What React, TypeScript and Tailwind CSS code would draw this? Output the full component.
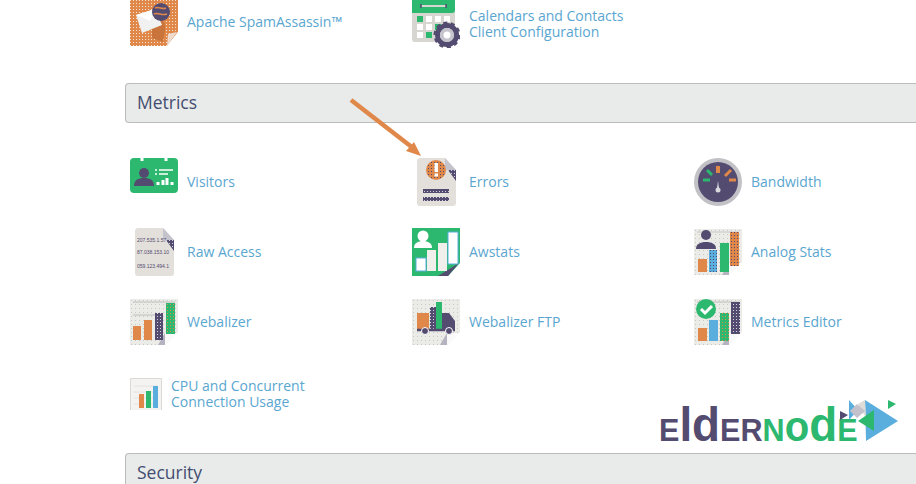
import type { ReactNode } from 'react';

const GREEN = '#2cb86f';
const PURPLE = '#534b70';
const ORANGE = '#e0884a';
const BLUE = '#5aaede';
const PAPER = '#e3e0db';
const SHEET = '#ebebe8';
const FOLD = '#b5b3c0';

const Icon = ({ children, w = 48 }: { children: ReactNode; w?: number }) => (
  <svg width={w} height={48} viewBox={`0 0 ${w} 48`} className="shrink-0 block">
    {children}
  </svg>
);

// the icons in the picture are dithered, these give the same speckle
const Dots = () => (
  <svg width="0" height="0" className="absolute">
    <defs>
      <pattern id="dotsLight" width="3" height="3" patternUnits="userSpaceOnUse">
        <rect x="0" y="0" width="1" height="1" fill="#fff" fillOpacity="0.75" />
      </pattern>
      <pattern id="dotsDark" width="3" height="3" patternUnits="userSpaceOnUse">
        <rect x="1" y="1" width="1" height="1" fill="#534b70" />
      </pattern>
      <pattern id="dotsOrange" width="3" height="3" patternUnits="userSpaceOnUse">
        <rect x="1" y="0" width="1" height="1" fill="#e0884a" />
      </pattern>
      <pattern id="dotsGrey" width="4" height="4" patternUnits="userSpaceOnUse">
        <rect x="1" y="2" width="1" height="1" fill="#c9c8c4" />
      </pattern>
    </defs>
  </svg>
);

const Sheet = () => (
  <>
    <path d="M0 1h48v33L35 47H0z" fill={SHEET} />
    <path d="M0 1h48v33L35 47H0z" fill="url(#dotsGrey)" />
    <path d="M35 47V35h13z" fill="#fafafa" />
    <path d="M28 47l7-12v12z" fill={FOLD} />
  </>
);

const Doc = () => (
  <>
    <path d="M7 0h26l11 12v33a3 3 0 0 1-3 3H8a3 3 0 0 1-3-3V2z" fill={PAPER} />
    <path d="M33 0l11 12-11 0z" fill="#c4c3cc" />
    <path d="M36 12h8v11z" fill={PURPLE} />
    <path d="M36 12h8v11z" fill="url(#dotsLight)" />
  </>
);

const SpamIcon = () => (
  <Icon>
    <g transform="translate(0 2)">
      <path d="M0 0h48v32L37 46H0z" fill={ORANGE} />
      <path d="M0 0h48v32L37 46H0z" fill="url(#dotsLight)" />
      <path d="M37 46l11-14v14z" fill="#fff" />
      <path d="M37 46l10-14-9 2z" fill="#eddccf" />
      <path d="M22 18c8-4 14 2 13 12l-2 12-11-4z" fill="#c9743a" />
      <path d="M6 15l19-6 7 16-20 8z" fill="#f1f1f1" />
      <path d="M6 15l14 6 5-12z" fill="#fff" />
      <circle cx="31" cy="12" r="9" fill={PURPLE} />
      <path d="M25 8c4-2 7 2 11 0M24 14c4-2 8 2 13 0" stroke={ORANGE} strokeWidth="1.5" fill="none" />
    </g>
  </Icon>
);

const CalendarIcon = () => (
  <Icon>
    <rect x="0" y="6" width="43" height="36" rx="3" fill="#d8d6d1" />
    <path d="M0 0h43v10a3 3 0 0 1-3 3H0z" fill={GREEN} />
    <path d="M9 6h25" stroke="#d8d6d1" strokeWidth="2" />
    <path d="M9 4v4M34 4v4" stroke={PURPLE} strokeWidth="1.5" />
    {[5, 14, 23, 32].map((x) =>
      [16, 24, 32].map((y) => (
        <rect
          key={`${x}-${y}`}
          x={x}
          y={y}
          width="6"
          height="6"
          fill={(x === 5 && y === 16) || (x === 14 && y === 32) || (x === 23 && y === 24) ? GREEN : '#fff'}
        />
      ))
    )}
    <circle cx="35" cy="35" r="9.5" fill="none" stroke={PURPLE} strokeWidth="5" />
    <circle cx="35" cy="35" r="12" fill="none" stroke={PURPLE} strokeWidth="3" strokeDasharray="4 3.5" />
    <circle cx="35" cy="35" r="7" fill="#c5c4cc" />
    <circle cx="35" cy="35" r="3.5" fill="#fff" />
  </Icon>
);

const VisitorsIcon = () => (
  <Icon>
    <rect x="0" y="0" width="48" height="35" rx="4" fill={GREEN} />
    <path d="M12 0v3M36 0v3" stroke="#fff" strokeWidth="3" />
    <circle cx="14" cy="15" r="5" fill={PURPLE} />
    <path d="M4 28c0-6 4-8 10-8s10 2 10 8z" fill={PURPLE} />
    <path d="M29 12h14M29 16h9" stroke="#fff" strokeWidth="1.5" />
    <path d="M25 12h2M25 16h2" stroke="#fff" strokeWidth="1.5" />
    <path d="M28 27v-3M33 27v-5M37 27v-7M42 27v-3" stroke="#fff" strokeWidth="3" />
  </Icon>
);

const ErrorsIcon = () => (
  <Icon>
    <Doc />
    <circle cx="24" cy="12" r="10" fill={ORANGE} />
    <circle cx="24" cy="12" r="10" fill="url(#dotsDark)" />
    <rect x="22.5" y="5" width="3.5" height="9" fill="#fff" />
    <rect x="22.5" y="15.5" width="3.5" height="3" fill="#fff" />
    <rect x="11" y="31" width="26" height="4" fill={PURPLE} />
    <rect x="11" y="31" width="26" height="4" fill="url(#dotsLight)" />
    <rect x="11" y="39" width="26" height="4" fill={PURPLE} />
    <rect x="11" y="39" width="26" height="4" fill="url(#dotsLight)" />
  </Icon>
);

const BandwidthIcon = () => (
  <Icon>
    <circle cx="24" cy="24" r="24" fill="#c2c2c6" />
    <circle cx="24" cy="24" r="20" fill={PURPLE} />
    <path d="M24 8v7" stroke={ORANGE} strokeWidth="4" />
    <path d="M37 12l-6 6" stroke={ORANGE} strokeWidth="3" />
    <path d="M35 22h7" stroke={ORANGE} strokeWidth="3" />
    <path d="M13 12l5 5" stroke={GREEN} strokeWidth="3" />
    <path d="M9 22h7" stroke={GREEN} strokeWidth="3" />
    <path d="M24 23l-1 9h2z" fill="#fff" />
    <circle cx="24" cy="32" r="2.5" fill="#d8d8dc" />
  </Icon>
);

const RawIcon = () => (
  <Icon>
    <Doc />
    <g fill={PURPLE} fontSize="5" fontFamily="'Liberation Sans', sans-serif">
      <text x="7" y="14">207.535.1.57</text>
      <text x="7" y="26">87.038.153.10</text>
      <text x="7" y="40">059.123.494.1</text>
    </g>
  </Icon>
);

const AwstatsIcon = () => (
  <Icon>
    <path d="M0 0h48v35L36 48H0z" fill={GREEN} />
    <path d="M26 48l21-13-11 13z" fill={PURPLE} />
    <circle cx="11" cy="8" r="5.5" fill="#fff" />
    <path d="M2 20c0-5 4-7 9-7s9 2 9 7z" fill="#fff" />
    <rect x="4" y="30" width="10" height="13" fill="#fff" stroke={BLUE} />
    <rect x="15" y="22" width="9" height="21" fill="#f1efec" />
    <rect x="26" y="15" width="9" height="28" fill="#f1efec" />
    <rect x="36" y="4" width="10" height="32" fill="#fff" stroke={BLUE} />
  </Icon>
);

const AnalogIcon = () => (
  <Icon>
    <Sheet />
    <path d="M3 4h42" stroke="#c9c8c8" strokeWidth="1" />
    <circle cx="12" cy="7" r="5" fill={PURPLE} />
    <path d="M2 21c0-5 4-7 10-7s10 2 10 7z" fill={PURPLE} />
    <rect x="4" y="31" width="9" height="13" fill={ORANGE} />
    <rect x="15" y="22" width="8" height="22" fill={BLUE} />
    <rect x="15" y="22" width="8" height="22" fill="url(#dotsDark)" />
    <rect x="26" y="15" width="9" height="29" fill={GREEN} />
    <rect x="36" y="4" width="9" height="34" fill={ORANGE} />
    <rect x="36" y="4" width="9" height="34" fill="url(#dotsDark)" />
  </Icon>
);

const WebalizerIcon = () => (
  <Icon>
    <Sheet />
    <path d="M3 4h42M3 17h30" stroke="#bdbcbc" strokeWidth="1" />
    <rect x="3" y="28" width="8" height="14" fill={ORANGE} />
    <rect x="14" y="22" width="8" height="20" fill={ORANGE} />
    <rect x="25" y="15" width="8" height="27" fill={PURPLE} />
    <rect x="25" y="15" width="8" height="27" fill="url(#dotsLight)" />
    <rect x="36" y="5" width="9" height="31" fill={GREEN} />
    <rect x="36" y="5" width="9" height="31" fill="url(#dotsOrange)" />
  </Icon>
);

const FtpIcon = () => (
  <Icon>
    <Sheet />
    <rect x="5" y="15" width="12" height="16" fill={ORANGE} />
    <rect x="18" y="9" width="6" height="22" fill={PURPLE} />
    <rect x="18" y="9" width="6" height="22" fill="url(#dotsLight)" />
    <rect x="24" y="4" width="6" height="27" fill={GREEN} />
    <path d="M30 15h7l6 8v9H30z" fill={PURPLE} />
    <path d="M5 32h38" stroke={PURPLE} strokeWidth="2.5" />
    <circle cx="13" cy="33" r="3.5" fill={PURPLE} stroke="#fff" />
    <circle cx="37" cy="33" r="3.5" fill={PURPLE} stroke="#fff" />
  </Icon>
);

const EditorIcon = () => (
  <Icon>
    <Sheet />
    <path d="M3 4h42" stroke="#bdbcbc" strokeWidth="1" />
    <rect x="4" y="30" width="9" height="13" fill={ORANGE} />
    <rect x="15" y="22" width="9" height="21" fill={BLUE} />
    <rect x="26" y="15" width="9" height="28" fill={GREEN} />
    <rect x="26" y="15" width="9" height="28" fill="url(#dotsOrange)" />
    <rect x="37" y="4" width="9" height="32" fill={PURPLE} />
    <rect x="37" y="4" width="9" height="32" fill="url(#dotsLight)" />
    <circle cx="12" cy="11" r="10" fill={GREEN} />
    <path d="M7 11l4 4 7-7" stroke="#fff" strokeWidth="3" fill="none" />
  </Icon>
);

const CpuIcon = () => (
  <svg width={32} height={32} viewBox="0 0 32 32" className="shrink-0 block">
    <path d="M0 0h32v32H0z" fill="#f4f3f1" />
    <path d="M.5 32V.5h31V32" fill="none" stroke="#dcd9d4" />
    <path d="M4 8h24M4 14h24M4 20h24M4 26h24" stroke="#e2e2e2" />
    <rect x="9" y="16" width="5" height="14" fill={ORANGE} />
    <rect x="16" y="13" width="5" height="17" fill={GREEN} />
    <rect x="23" y="8" width="5" height="22" fill={BLUE} />
  </svg>
);

const Tile = ({ icon, label }: { icon: ReactNode; label: ReactNode }) => (
  <a href="#" className="flex items-center gap-[9px] text-[14px] leading-[16px] text-[#5aa6d0]">
    {icon}
    <span>{label}</span>
  </a>
);

const Panel = ({ title, className }: { title: string; className: string }) => (
  <div className={`flex items-center h-10 pl-[11px] pb-[2px] bg-[#e9ebeb] border border-[#bcbcbc] rounded-l-[4px] border-r-0 text-[17.5px] text-[#434d70] ${className}`}>
    {title}
  </div>
);

const Logo = () => (
  <div className="absolute left-[659px] top-[398px] w-[245px] h-[50px]">
    <div className="absolute left-0 bottom-[-1px] flex items-baseline origin-left scale-x-[0.955] font-bold leading-none font-['Liberation_Sans',sans-serif] text-[32px] whitespace-nowrap">
      <span className="text-[#534b70]">E<span className="text-[48px]">ld</span>ER</span>
      <span className="text-[#2cb86f]">N<span className="text-[42px]">o</span><span className="text-[48px]">d</span>E</span>
    </div>
    <svg width="245" height="50" viewBox="0 0 245 50" className="absolute left-0 top-0">
      <path d="M181 13l8 4-8 5z" fill={PURPLE} />
      <path d="M190 2l9 10-9 10z" fill={BLUE} />
      <path d="M206 2l33 21-32 20z" fill={BLUE} />
      <path d="M229 2l8 4-8 5z" fill={GREEN} />
      <path d="M199 6l7-4 1 18z" fill="#dedcd8" />
      <path d="M191 13l7-7 8 7-8 7z" fill="#c2c1cc" />
      <path d="M199 23l16-11v21z" fill={GREEN} />
    </svg>
  </div>
);

export default function App() {
  return (
    <div className="relative w-[916px] h-[484px] overflow-hidden bg-white font-['Open_Sans',sans-serif]">
      <Dots />
      <div className="grid grid-cols-[282px_282px_222px] ml-[130px] h-[83px] items-start">
        <div className="h-[44px] flex items-center">
          <Tile icon={<SpamIcon />} label="Apache SpamAssassin™" />
        </div>
        <div className="h-[48px] flex items-center">
          <Tile icon={<CalendarIcon />} label={<>Calendars and Contacts<br />Client Configuration</>} />
        </div>
      </div>

      <Panel title="Metrics" className="ml-[125px]" />

      <div className="ml-[130px] mt-[35px] grid grid-cols-[282px_282px_222px] auto-rows-[48px] gap-y-[22px]">
        <Tile icon={<VisitorsIcon />} label="Visitors" />
        <Tile icon={<ErrorsIcon />} label="Errors" />
        <Tile icon={<BandwidthIcon />} label="Bandwidth" />
        <Tile icon={<RawIcon />} label="Raw Access" />
        <Tile icon={<AwstatsIcon />} label="Awstats" />
        <Tile icon={<AnalogIcon />} label="Analog Stats" />
        <Tile icon={<WebalizerIcon />} label="Webalizer" />
        <Tile icon={<FtpIcon />} label="Webalizer FTP" />
        <Tile icon={<EditorIcon />} label="Metrics Editor" />
      </div>

      <div className="ml-[130px] mt-[32px]">
        <Tile icon={<CpuIcon />} label={<>CPU and Concurrent<br />Connection Usage</>} />
      </div>

      <Panel title="Security" className="ml-[125px] mt-[43px]" />

      <svg width="916" height="484" className="absolute left-0 top-0 pointer-events-none">
        <path d="M351 100l62 48" stroke="#e0884a" strokeWidth="4.5" fill="none" />
        <path d="M421 156l-15-5 8-9z" fill="#e0884a" />
      </svg>
      <Logo />
    </div>
  );
}
